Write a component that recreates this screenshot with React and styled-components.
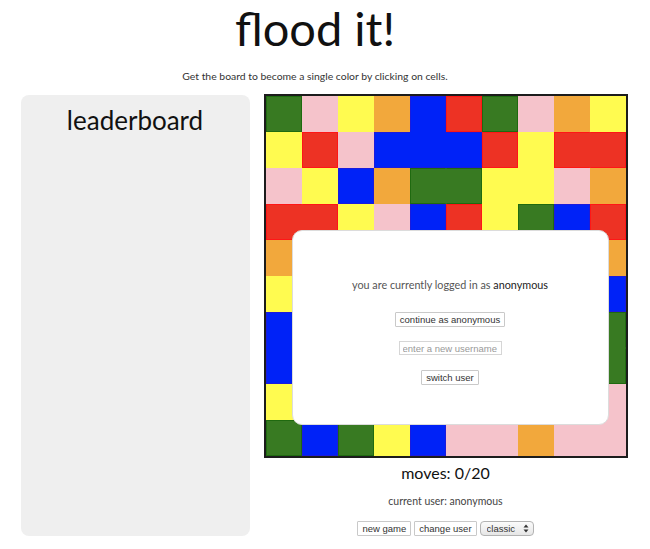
import React from 'react';
import styled, { createGlobalStyle } from 'styled-components';

const GlobalStyle = createGlobalStyle`
    body {
        margin: 0;
        background: #fff;
        font-family: Lato, "Open Sans", sans-serif;
        color: #111;
    }
`;

const COLORS = {
    G: '#387a22',
    P: '#f5c3cb',
    Y: '#fffb50',
    O: '#f2a83c',
    B: '#0022f7',
    R: '#ed3224',
};

const EDGES = {
    G: '#1f6a10',
    P: '#f5c3cb',
    Y: '#fffb50',
    O: '#f2a83c',
    B: '#1b1bdc',
    R: '#ff1616',
};

const BOARD = [
    'GPYOBRGPOY',
    'YRPBBBRYRR',
    'PYBOGGYYPO',
    'RRYPBRYGBR',
    'OYRGPBYRGO',
    'YGORBYPGRB',
    'BRYPGOBYOG',
    'BOGYRPGBPG',
    'YPRBOGROYP',
    'GBGYBPPOPP',
];

const edgesOf = (r, c) => {
    const me = BOARD[r][c];
    const differs = (rr, cc) => !BOARD[rr] || !BOARD[rr][cc] || BOARD[rr][cc] !== me;
    return {
        top: differs(r - 1, c),
        right: differs(r, c + 1),
        bottom: differs(r + 1, c),
        left: differs(r, c - 1),
    };
};

function App() {
    return (
        <>
            <GlobalStyle />
            <Page>
                <Header>
                    <Title>flood it!</Title>
                    <Subtitle>Get the board to become a single color by clicking on cells.</Subtitle>
                </Header>
                <Main>
                    <Leaderboard>
                        <h2>leaderboard</h2>
                    </Leaderboard>
                    <GameColumn>
                        <Board>
                            {BOARD.map((row, r) =>
                                row.split('').map((color, c) => (
                                    <Cell key={`${r}-${c}`} $color={color} $edges={edgesOf(r, c)} />
                                ))
                            )}
                            <LoginModal>
                                <ModalText>
                                    you are currently logged in as <span>anonymous</span>
                                </ModalText>
                                <SmallButton $mt={20}>continue as anonymous</SmallButton>
                                <UsernameInput placeholder="enter a new username" />
                                <SmallButton $mt={15}>switch user</SmallButton>
                            </LoginModal>
                        </Board>
                        <Moves>moves: 0/20</Moves>
                        <CurrentUser>current user: anonymous</CurrentUser>
                        <Controls>
                            <SmallButton>new game</SmallButton>
                            <SmallButton>change user</SmallButton>
                            <SelectWrap>
                                <select defaultValue="classic">
                                    <option value="classic">classic</option>
                                </select>
                                <svg width="6" height="9" viewBox="0 0 6 9">
                                    <path d="M3 0.5 L5.5 3.5 L0.5 3.5 Z" fill="#333" />
                                    <path d="M3 8.5 L5.5 5.5 L0.5 5.5 Z" fill="#333" />
                                </svg>
                            </SelectWrap>
                        </Controls>
                    </GameColumn>
                </Main>
            </Page>
        </>
    );
}

const Page = styled.div`
    display: flex;
    flex-direction: column;
    align-items: center;
`;

const Header = styled.header`
    align-self: stretch;
    display: flex;
    flex-direction: column;
    align-items: center;
    padding-right: 20px;
`;

const Title = styled.h1`
    margin: 0;
    font-size: 47px;
    line-height: 57px;
    font-weight: 400;
    color: #111;
`;

const Subtitle = styled.p`
    margin: 12px 0 0;
    font-size: 10.4px;
    line-height: 14px;
    color: #333;
`;

const Main = styled.div`
    display: flex;
    gap: 14px;
    margin-top: 11px;
    margin-left: -2px;
    align-items: stretch;
`;

const Leaderboard = styled.div`
    width: 229px;
    margin-top: 1px;
    background: #efefef;
    border-radius: 8px;
    padding-top: 9px;
    text-align: center;

    h2 {
        margin: 0;
        font-size: 26px;
        line-height: 32px;
        font-weight: 400;
        color: #111;
    }
`;

const GameColumn = styled.div`
    width: 364px;
    display: flex;
    flex-direction: column;
    align-items: center;
`;

const Board = styled.div`
    position: relative;
    display: grid;
    grid-template-columns: repeat(10, 36px);
    grid-auto-rows: 36px;
    border: 2px solid #1c1c1c;
`;

const Cell = styled.div`
    box-sizing: border-box;
    background: ${p => COLORS[p.$color]};
    border: 1px solid transparent;
    border-top-color: ${p => (p.$edges.top ? EDGES[p.$color] : 'transparent')};
    border-right-color: ${p => (p.$edges.right ? EDGES[p.$color] : 'transparent')};
    border-bottom-color: ${p => (p.$edges.bottom ? EDGES[p.$color] : 'transparent')};
    border-left-color: ${p => (p.$edges.left ? EDGES[p.$color] : 'transparent')};
`;

const LoginModal = styled.div`
    position: absolute;
    left: 26px;
    top: 134px;
    width: 317px;
    height: 195px;
    box-sizing: border-box;
    background: #fff;
    border: 1px solid #dcdcdc;
    border-radius: 10px;
    padding-top: 47px;
    display: flex;
    flex-direction: column;
    align-items: center;
`;

const ModalText = styled.p`
    margin: 0;
    font-size: 10.8px;
    line-height: 14px;
    color: #555;

    span {
        color: #222;
    }
`;

const SmallButton = styled.button`
    margin-top: ${p => (p.$mt ? `${p.$mt}px` : '0')};
    height: 15px;
    padding: 0 4px;
    box-sizing: border-box;
    background: #fff;
    border: 1px solid #c9c9c9;
    border-radius: 1px;
    font-family: "Liberation Sans", Arial, sans-serif;
    font-size: 9.5px;
    line-height: 13px;
    color: #333;
`;

const UsernameInput = styled.input`
    margin-top: 14px;
    width: 103px;
    height: 14px;
    box-sizing: border-box;
    padding: 0 3px;
    border: 1px solid #d6d6d6;
    border-radius: 0;
    font-family: "Liberation Sans", Arial, sans-serif;
    font-size: 9.5px;
    color: #333;
    outline: none;

    &::placeholder {
        color: #999;
    }
`;

const Moves = styled.div`
    margin-top: 5px;
    font-size: 16px;
    line-height: 20px;
    color: #111;
`;

const CurrentUser = styled.div`
    margin-top: 11px;
    font-size: 10.5px;
    line-height: 14px;
    color: #444;
`;

const Controls = styled.div`
    margin-top: 13px;
    display: flex;
    gap: 3px;
`;

const SelectWrap = styled.div`
    position: relative;
    display: flex;

    select {
        appearance: none;
        -webkit-appearance: none;
        width: 54px;
        height: 15px;
        box-sizing: border-box;
        padding: 0 0 0 6px;
        border: 1px solid #b3b3b3;
        border-radius: 4px;
        background: linear-gradient(#fbfbfb, #e6e6e6);
        font-family: "Liberation Sans", Arial, sans-serif;
        font-size: 9.5px;
        color: #333;
        outline: none;
    }

    svg {
        position: absolute;
        right: 5px;
        top: 3px;
        pointer-events: none;
    }
`;

export default App;
